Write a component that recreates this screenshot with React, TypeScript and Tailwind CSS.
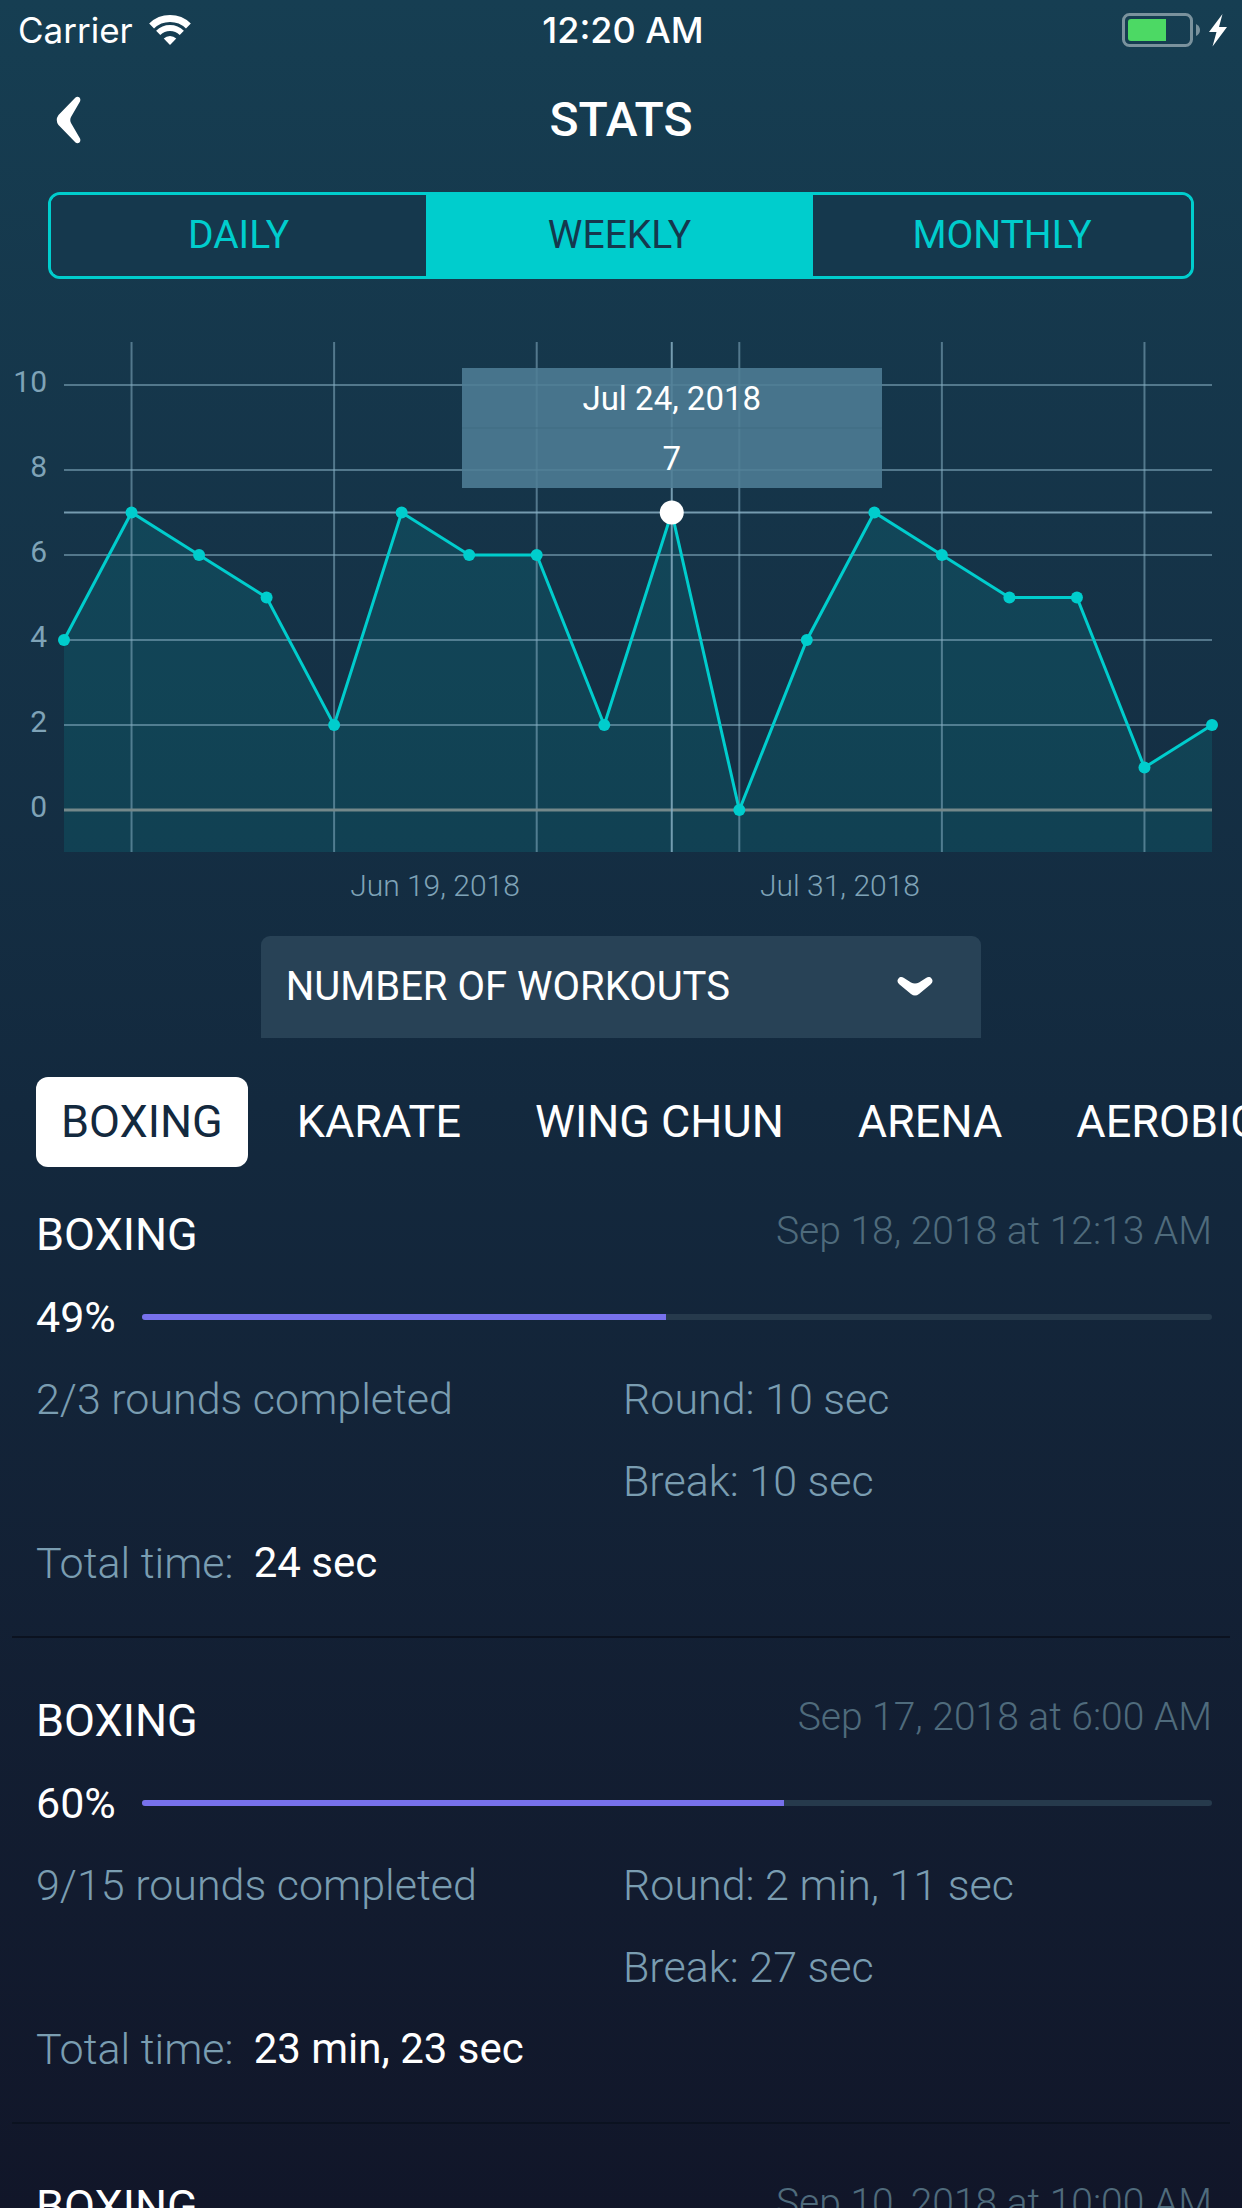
import { useState } from 'react';
import clsx from 'clsx';

interface Workout {
  title: string;
  date: string;
  percent: number;
  rounds: string;
  round: string;
  pause: string;
  total: string;
}

const PERIODS = ['DAILY', 'WEEKLY', 'MONTHLY'];
const CATEGORIES = ['BOXING', 'KARATE', 'WING CHUN', 'ARENA', 'AEROBICS'];

const WORKOUTS: Workout[] = [
  {
    title: 'BOXING',
    date: 'Sep 18, 2018 at 12:13 AM',
    percent: 49,
    rounds: '2/3',
    round: '10 sec',
    pause: '10 sec',
    total: '24 sec',
  },
  {
    title: 'BOXING',
    date: 'Sep 17, 2018 at 6:00 AM',
    percent: 60,
    rounds: '9/15',
    round: '2 min, 11 sec',
    pause: '27 sec',
    total: '23 min, 23 sec',
  },
];

const VALUES = [4, 7, 6, 5, 2, 7, 6, 6, 2, 7, 0, 4, 7, 6, 5, 5, 1, 2];
const SELECTED = 9;

// plot area inside the chart's viewBox
const LEFT = 64;
const RIGHT = 1212;
const TOP = 12;
const BOTTOM = 522;

const px = (i: number) => LEFT + (i * (RIGHT - LEFT)) / (VALUES.length - 1);
const py = (v: number) => 480 - v * 42.5;

const StatusBar = () => (
  <div className="grid grid-cols-3 items-center h-[60px] pl-[18px] pr-[14px] font-['Inter',sans-serif] text-[35px] leading-[60px]">
    <div className="flex items-center gap-4">
      <span>Carrier</span>
      <svg className="w-[42px] h-[30px]" viewBox="0 0 42 30" fill="none" stroke="white">
        <path d="M2.6 11A26.5 26.5 0 0 1 39.4 11" strokeWidth="7" />
        <path d="M9.2 17.8A17 17 0 0 1 32.8 17.8" strokeWidth="6" />
        <path d="M21 30L14.75 23.5A9 9 0 0 1 27.25 23.5Z" fill="white" stroke="none" />
      </svg>
    </div>
    <span className="text-center text-[36px] font-medium">12:20 AM</span>
    <svg className="justify-self-end w-[106px] h-[34px]" viewBox="0 0 106 34" fill="none">
      <rect x="1.5" y="1.5" width="68" height="31" rx="6" stroke="#7a929d" strokeWidth="3" />
      <path d="M74 11Q78 13 78 17T74 23Z" fill="#7a929d" />
      <path d="M9 6H44V28H9Q6 28 6 25V9Q6 6 9 6Z" fill="#4cd964" />
      <path d="M100.500 1L87 19H94.500L90.500 33.500L105 14H97Z" fill="white" />
    </svg>
  </div>
);

const Chart = () => {
  const points = VALUES.map((v, i) => `${px(i)},${py(v)}`);

  return (
    <svg className="w-full mt-[51px] font-['Roboto',sans-serif]" viewBox="0 0 1242 580">
      <polygon
        points={`${LEFT},${BOTTOM} ${points.join(' ')} ${RIGHT},${BOTTOM}`}
        fill="#00cdcd"
        fillOpacity="0.12"
      />
      <g stroke="#86aec2" strokeOpacity="0.55" strokeWidth="2">
        {[2, 4, 6, 8, 10].map(v => (
          <line key={v} x1={LEFT} x2={RIGHT} y1={py(v)} y2={py(v)} />
        ))}
        {[1, 4, 7, 10, 13, 16].map(i => (
          <line key={i} x1={px(i)} x2={px(i)} y1={TOP} y2={BOTTOM} />
        ))}
      </g>
      <line x1={LEFT} x2={RIGHT} y1={py(0)} y2={py(0)} stroke="#74888a" strokeWidth="3" />
      <g stroke="#86aec2" strokeOpacity="0.85" strokeWidth="2">
        <line x1={LEFT} x2={RIGHT} y1={py(7)} y2={py(7)} />
        <line x1={px(SELECTED)} x2={px(SELECTED)} y1={TOP} y2={BOTTOM} />
      </g>
      <polyline points={points.join(' ')} fill="none" stroke="#00cdcd" strokeWidth="3" />
      {VALUES.map((v, i) => (
        <circle
          key={i}
          cx={px(i)}
          cy={py(v)}
          r={i === SELECTED ? 12 : 6}
          fill={i === SELECTED ? '#ffffff' : '#00cdcd'}
        />
      ))}

      <rect x="462" y="38" width="420" height="120" fill="#4e7d95" fillOpacity="0.88" />
      <line x1="462" x2="882" y1="98" y2="98" stroke="#406c82" strokeWidth="1" />
      <g fill="white" fontSize="33" textAnchor="middle">
        <text x={px(SELECTED)} y="80">Jul 24, 2018</text>
        <text x={px(SELECTED)} y="140">7</text>
      </g>

      <g fill="#7fa3b7" fontSize="30" textAnchor="end">
        {[0, 2, 4, 6, 8, 10].map(v => (
          <text key={v} x="47" y={py(v) + 7}>{v}</text>
        ))}
      </g>
      <g fill="#7fa3b7" fontSize="30" fontWeight="300" textAnchor="middle">
        <text x="435" y="566">Jun 19, 2018</text>
        <text x="840" y="566">Jul 31, 2018</text>
      </g>
    </svg>
  );
};

const WorkoutHeader = ({ title, date }: { title: string; date: string }) => (
  <div className="flex justify-between h-[82px] mr-[-6px]">
    <h2 className="text-[45px] leading-[82px]">{title}</h2>
    <time className="text-[39px] leading-[74px] font-light text-[#4f6b7c]">{date}</time>
  </div>
);

const WorkoutCard = ({ workout }: { workout: Workout }) => (
  <li className="mx-3 px-6 pb-8 mb-[42px] border-b-2 border-[#0b1220] text-[43px] leading-[82px]">
    <WorkoutHeader title={workout.title} date={workout.date} />
    <div className="flex items-center gap-[26px]">
      <span>{workout.percent}%</span>
      <div className="flex-1 h-[6px] mr-[-6px] rounded-full overflow-hidden bg-[#263a4c]">
        <div className="h-full bg-[#7771ec]" style={{ width: `${workout.percent}%` }}></div>
      </div>
    </div>
    <div className="grid grid-cols-2 gap-x-1 font-light text-[#7a9db1]">
      <p>{workout.rounds} rounds completed</p>
      <div>
        <p>Round: {workout.round}</p>
        <p>Break: {workout.pause}</p>
      </div>
    </div>
    <p className="flex gap-5">
      <span className="font-light text-[#7a9db1]">Total time:</span>
      <span className="text-[42px]">{workout.total}</span>
    </p>
  </li>
);

const App = () => {
  const [period, setPeriod] = useState('WEEKLY');
  const [category, setCategory] = useState('BOXING');

  return (
    <div className="h-screen flex flex-col overflow-hidden bg-linear-to-b from-[#163e52] via-[#13293e] to-[#111629] text-white font-['Roboto',sans-serif]">
      <StatusBar />

      <header className="relative flex items-center justify-center h-[120px]">
        <button className="absolute left-14" aria-label="Back">
          <svg className="w-[26px] h-[48px]" viewBox="0 0 26 48" fill="white">
            <path d="M19.500 1.500C22-.5 25.500 2 24 5.500L15 21Q13.500 24 15 27L24 42.500C25.500 46 22 48.500 19.500 46.500L2.500 29Q-1 24 2.500 19Z" />
          </svg>
        </button>
        <h1 className="text-[48px] font-medium">STATS</h1>
      </header>

      <div className="grid grid-cols-[375fr_387fr_378fr] h-[87px] shrink-0 mx-12 mt-3 border-3 border-[#00cdcd] rounded-xl overflow-hidden text-[39px]">
        {PERIODS.map(name => (
          <button
            key={name}
            onClick={() => setPeriod(name)}
            className={name === period ? 'bg-[#00cdcd] text-[#15384d]' : 'bg-[#15384d] text-[#00cdcd]'}
          >
            {name}
          </button>
        ))}
      </div>

      <Chart />

      <div className="relative w-[58%] h-[102px] shrink-0 mx-auto mt-[26px]">
        <select
          aria-label="Metric"
          className="appearance-none w-full h-full px-[25px] rounded-t-[9px] bg-[#284256] text-[40px]"
        >
          <option>NUMBER OF WORKOUTS</option>
        </select>
        <svg
          className="absolute right-12 top-[41px] w-[36px] h-[19px] pointer-events-none"
          viewBox="0 0 36 19"
          fill="white"
        >
          <path d="M1.500 1.500C3-.3 5-.2 7 1L14 5.500Q18 7.500 22 5.500L29 1C31-.2 33-.3 34.500 1.500Q37 4.500 33.500 7.500L22 17Q18 20 14 17L2.500 7.500Q-1 4.500 1.500 1.500Z" />
        </svg>
      </div>

      <nav className="flex gap-6 shrink-0 pl-9 mt-[39px] mb-[27px] overflow-hidden">
        {CATEGORIES.map(name => (
          <button
            key={name}
            onClick={() => setCategory(name)}
            className={clsx(
              'shrink-0 h-[90px] px-[25px] rounded-xl text-[45px]',
              name === category && 'bg-white text-[#13293e]'
            )}
          >
            {name}
          </button>
        ))}
      </nav>

      <ul className="flex-1 overflow-hidden">
        {WORKOUTS.map(workout => (
          <WorkoutCard key={workout.date} workout={workout} />
        ))}
        <li className="px-9">
          <WorkoutHeader title="BOXING" date="Sep 10, 2018 at 10:00 AM" />
        </li>
      </ul>
    </div>
  );
};

export default App;
